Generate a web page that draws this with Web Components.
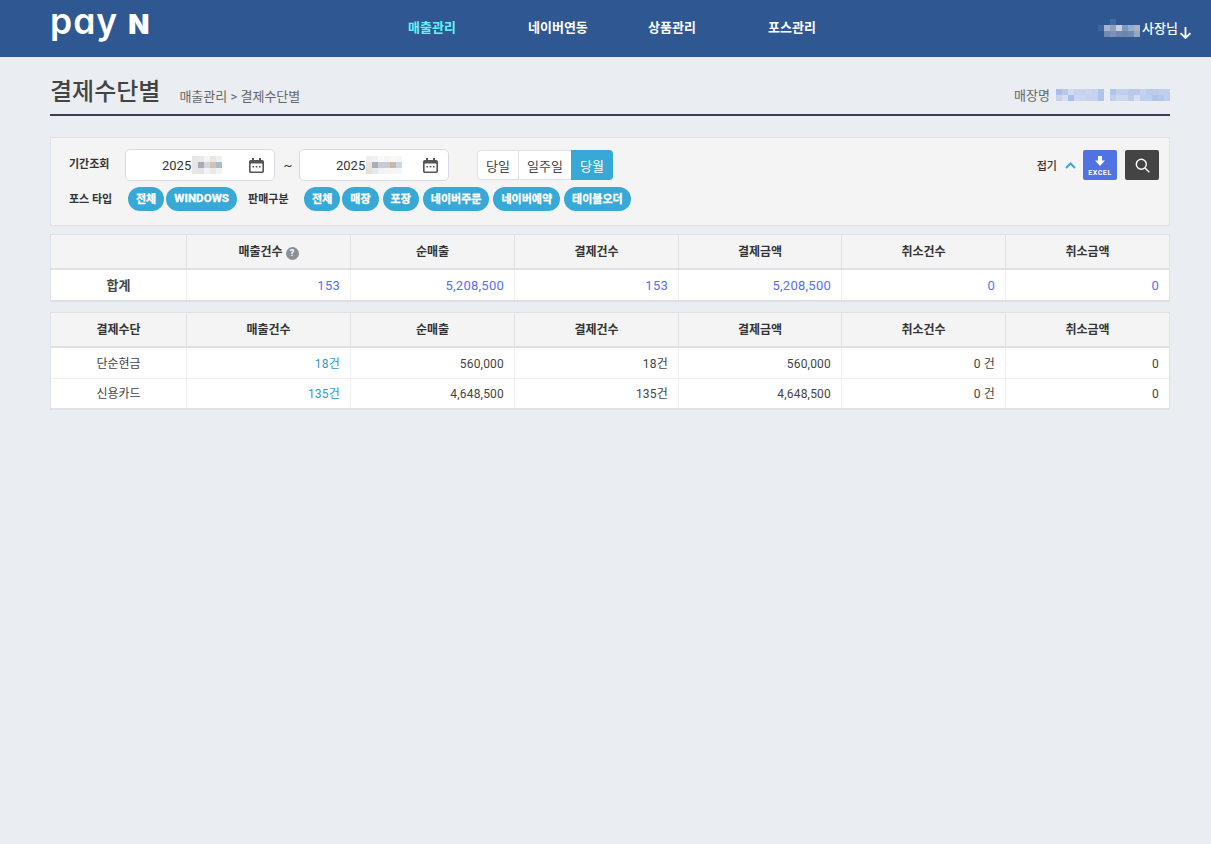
<!DOCTYPE html>
<html lang="ko">
<head>
<meta charset="utf-8">
<title>결제수단별</title>
<style>
  html, body { margin: 0; height: 100%; }
  body {
    background: #eaedf2;
    color: #444;
    font: 13px Roboto, "Noto Sans CJK KR", sans-serif;
  }
  main { display: block; padding: 0 41px 0 50px; }
</style>
</head>
<body>
<app-header></app-header>
<main>
  <page-title heading="결제수단별" crumb="매출관리 &gt; 결제수단별"></page-title>
  <filter-panel></filter-panel>

  <sales-table style="margin-top:8px">
    <sales-row head>
      <sales-cell></sales-cell>
      <sales-cell>매출건수 <help-dot></help-dot></sales-cell>
      <sales-cell>순매출</sales-cell>
      <sales-cell>결제건수</sales-cell>
      <sales-cell>결제금액</sales-cell>
      <sales-cell>취소건수</sales-cell>
      <sales-cell>취소금액</sales-cell>
    </sales-row>
    <sales-row>
      <sales-cell kind="title">합계</sales-cell>
      <sales-cell kind="total">153</sales-cell>
      <sales-cell kind="total">5,208,500</sales-cell>
      <sales-cell kind="total">153</sales-cell>
      <sales-cell kind="total">5,208,500</sales-cell>
      <sales-cell kind="total">0</sales-cell>
      <sales-cell kind="total">0</sales-cell>
    </sales-row>
  </sales-table>

  <sales-table style="margin-top:10px">
    <sales-row head>
      <sales-cell>결제수단</sales-cell>
      <sales-cell>매출건수</sales-cell>
      <sales-cell>순매출</sales-cell>
      <sales-cell>결제건수</sales-cell>
      <sales-cell>결제금액</sales-cell>
      <sales-cell>취소건수</sales-cell>
      <sales-cell>취소금액</sales-cell>
    </sales-row>
    <sales-row tall>
      <sales-cell kind="label">단순현금</sales-cell>
      <sales-cell kind="count">18건</sales-cell>
      <sales-cell kind="num">560,000</sales-cell>
      <sales-cell kind="num">18건</sales-cell>
      <sales-cell kind="num">560,000</sales-cell>
      <sales-cell kind="num">0 건</sales-cell>
      <sales-cell kind="num">0</sales-cell>
    </sales-row>
    <sales-row short>
      <sales-cell kind="label">신용카드</sales-cell>
      <sales-cell kind="count">135건</sales-cell>
      <sales-cell kind="num">4,648,500</sales-cell>
      <sales-cell kind="num">135건</sales-cell>
      <sales-cell kind="num">4,648,500</sales-cell>
      <sales-cell kind="num">0 건</sales-cell>
      <sales-cell kind="num">0</sales-cell>
    </sales-row>
  </sales-table>
</main>

<script>
  // pixelated area that stands in for masked text
  class MosaicBlur extends HTMLElement {
    connectedCallback() {
      const w = +this.getAttribute('w') || 6;
      const h = +this.getAttribute('h') || 6;
      const rows = (this.getAttribute('cells') || '').split('|').map(r => r.split(','));
      const cols = rows[0].length;
      const cells = rows.flat().map(c => `<i style="background:${c === '-' ? 'transparent' : '#' + c}"></i>`).join('');
      this.attachShadow({ mode: 'open' }).innerHTML = `
        <style>
          :host { display: inline-grid; grid-template-columns: repeat(${cols}, ${w}px); grid-auto-rows: ${h}px; vertical-align: middle; }
          i { display: block; }
        </style>${cells}`;
    }
  }
  customElements.define('mosaic-blur', MosaicBlur);

  class AppHeader extends HTMLElement {
    constructor() {
      super();
      const root = this.attachShadow({ mode: 'open' });
      root.innerHTML = `
        <style>
          :host { display: flex; align-items: center; height: 57px; background: #2f5892; color: #fff; padding: 0 19px 0 52px; }
          .logo { width: 356px; display: flex; align-items: baseline; height: 57px; white-space: nowrap; line-height: 43px; }
          .pay { font: 600 35.500px/43px Inter, sans-serif; font-feature-settings: "cv11"; margin-left: -2px; letter-spacing: 1px; }
          .n { font: 900 27.500px/43px Inter, sans-serif; margin-left: 10px; }
          nav { display: grid; grid-template-columns: repeat(4, 120px); font-weight: 700; font-size: 13px; padding-bottom: 4px; }
          nav a.on { color: #63f4fb; }
          .user { margin-left: auto; display: flex; align-items: center; font-size: 13px; font-weight: 500; padding-bottom: 2px; }
          .user span { margin-left: 2px; }
          svg { display: block; margin: 9px 0 0 1px; }
        </style>
        <div class="logo"><span class="pay">pay</span><span class="n">N</span></div>
        <nav><a class="on">매출관리</a><a>네이버연동</a><a>상품관리</a><a>포스관리</a></nav>
        <div class="user">
          <mosaic-blur cells="-,-,3f6aa0,-,-,-,-|3a659e,a5b3d0,8fa0c2,c8d0e2,7e97bb,8fb0d0,a9b2c8|-,6f8ab0,7d90b8,7088b0,6a88ae,6f8cb0,96a5c0"></mosaic-blur>
          <span>사장님</span>
          <svg width="13" height="13" viewBox="0 0 13 14" fill="none" stroke="#fff" stroke-width="2"><path d="M6.500 1v12M1.200 7.600l5.300 5.300 5.300-5.300"/></svg>
        </div>`;
    }
  }
  customElements.define('app-header', AppHeader);

  class PageTitle extends HTMLElement {
    connectedCallback() {
      this.attachShadow({ mode: 'open' }).innerHTML = `
        <style>
          :host { display: flex; align-items: flex-end; height: 57px; border-bottom: 2px solid #3c3c5c; margin-bottom: 21px; }
          .row { display: flex; align-items: flex-end; width: 100%; padding-bottom: 6px; }
          h1 { margin: 0; font-size: 24px; line-height: 32px; font-weight: 500; color: #444; }
          .crumb { margin-left: 19px; font-size: 13px; line-height: 22px; color: #666; }
          .store { margin-left: auto; font-size: 13px; line-height: 24px; color: #666; display: flex; align-items: center; }
          .store span { padding-top: 2px; }
          mosaic-blur { margin-left: 6px; }
        </style>
        <div class="row">
          <h1>${this.getAttribute('heading')}</h1>
          <span class="crumb">${this.getAttribute('crumb').replace('>', '&gt;')}</span>
          <div class="store"><span>매장명</span>
            <mosaic-blur cells="a9bfe9,b8c9ec,d0dcf0,c6d2ee,c6d2ee,cad6ee,c6d2ee,aec5ea|c6d2ee,d5deef,a9c0e9,cdd8ee,cad6ee,c6d2ee,c6d2ee,aec5ea"></mosaic-blur>
            <mosaic-blur cells="aec5ea,c0cfed,c0cfed,b8c9ec,b8c9ec,c6d2ee,b8ccee,b8ccee,c0cfed,c0cfed|c0cfed,cdd8ee,cdd8ee,bccbea,d8e0f0,c0cfed,bccfee,aec5ea,b5c8ea,bccfee"></mosaic-blur>
          </div>
        </div>`;
    }
  }
  customElements.define('page-title', PageTitle);

  class DateField extends HTMLElement {
    connectedCallback() {
      const cells = this.getAttribute('cells');
      const w = this.getAttribute('w');
      this.attachShadow({ mode: 'open' }).innerHTML = `
        <style>
          :host { display: flex; align-items: center; box-sizing: border-box; width: 150px; height: 32px; background: #fff; border: 1px solid #d8dadf; border-radius: 5px; padding: 0 10px 0 36px; font-size: 13px; color: #333; }
          svg { margin-left: auto; display: block; }
          mosaic-blur { margin-left: 1px; }
        </style>
        <span>2025</span>
        <mosaic-blur cells="${cells}" w="${w}"></mosaic-blur>
        <svg width="15" height="15" viewBox="0 0 15 15"><path d="M3 0h2v2h5V0h2v2h1.200c.9 0 1.800.8 1.800 1.800v9.400c0 1-.9 1.800-1.800 1.800H1.800C.9 15 0 14.200 0 13.200V3.800C0 2.800.9 2 1.800 2H3z" fill="#555"/><rect x="1.600" y="5.500" width="11.800" height="8" rx=".6" fill="#fff"/><path d="M3.500 8h1.500v1.600H3.500zM6.700 8h1.600v1.600H6.700zM10 8h1.500v1.600H10z" fill="#555"/></svg>`;
    }
  }
  customElements.define('date-field', DateField);

  class PillBtn extends HTMLElement {
    constructor() {
      super();
      this.attachShadow({ mode: 'open' }).innerHTML = `
        <style>
          :host { display: inline-flex; align-items: center; justify-content: center; box-sizing: border-box; height: 24px; padding: 0 8px 2px; border-radius: 12px; background: #38a9d6; color: #fff; font-size: 11px; font-weight: 700; -webkit-text-stroke: .3px #fff; white-space: nowrap; }
          :host([latin]) { font-size: 11.500px; letter-spacing: .1px; }
        </style><slot></slot>`;
    }
  }
  customElements.define('pill-btn', PillBtn);

  class FilterPanel extends HTMLElement {
    constructor() {
      super();
      this.attachShadow({ mode: 'open' }).innerHTML = `
        <style>
          :host { display: block; box-sizing: border-box; height: 89px; background: #f4f4f4; border: 1px solid #e0e1e4; padding: 11px 10px 0 18px; }
          .line { display: flex; align-items: center; }
          .top { height: 32px; }
          .bottom { height: 24px; margin-top: 6px; }
          .lbl { font-size: 11px; font-weight: 700; color: #333; }
          .top .lbl { width: 56px; margin-bottom: 4px; }
          .bottom .lbl { margin-bottom: 2px; }
          .bottom .lbl.first { width: 59px; }
          .tilde { width: 24px; box-sizing: border-box; padding-left: 2px; text-align: center; color: #333; }
          .seg { display: flex; height: 30px; margin-left: 28px; font-size: 13px; color: #444; }
          .seg span { display: flex; align-items: center; justify-content: center; box-sizing: border-box; background: #fff; border: 1px solid #e0e1e4; border-right: 0; }
          .seg span:first-child { width: 41px; border-radius: 4px 0 0 4px; }
          .seg span:nth-child(2) { width: 53px; }
          .seg span.on { width: 42px; background: #38a9d6; border: 0; color: #fff; border-radius: 0 4px 4px 0; }
          .tools { margin-left: auto; display: flex; align-items: center; }
          .fold { font-size: 11px; font-weight: 500; color: #333; }
          .chev { margin: 0 7px 0 8px; display: block; }
          .excel { width: 34px; height: 30px; border-radius: 2px; background: #4f73e3; color: #fff; display: flex; flex-direction: column; align-items: center; font: 700 7px/8px Roboto, sans-serif; letter-spacing: .6px; padding-top: 6px; box-sizing: border-box; }
          .excel svg { display: block; margin-bottom: 3px; }
          .find { width: 34px; height: 30px; border-radius: 2px; background: #444; margin-left: 8px; display: flex; align-items: center; justify-content: center; }
          .mid { margin-left: 11px; width: 56px; }
          pill-btn + pill-btn { margin-left: 4px; }
          .tight { margin-left: 2px !important; }
        </style>
        <div class="line top">
          <span class="lbl">기간조회</span>
          <date-field w="6" cells="e9e6e6,eae8ea,f4f4f5,ebe6e2,eff0f2|e8e6e4,a9abb9,d6d6da,cfc2b8,aebbc6|e9e6e4,e4e4e6,f2f2f4,eee9e5,f2f3f4"></date-field>
          <span class="tilde">~</span>
          <date-field w="6" cells="f0eeec,f2f1f1,fafafc,f8f6f5,fbf7f3,f4f6fa|e8e4dc,a7aeb9,c8cbd2,c8cbd2,c7b8a8,c8d8e8|e4e0da,e8e8ea,f0f2f6,f4f4f6,fbf5f0,f4f6fa"></date-field>
          <div class="seg"><span>당일</span><span>일주일</span><span class="on">당월</span></div>
          <div class="tools">
            <span class="fold">접기</span>
            <svg class="chev" width="11" height="7" viewBox="0 0 11 7" fill="none" stroke="#38a9d6" stroke-width="2"><path d="M1 6l4.500-4.500L10 6"/></svg>
            <div class="excel"><svg width="10" height="10" viewBox="0 0 10 10" fill="#fff"><path d="M3 0h4v4.500h3L5 10 0 4.500h3z"/></svg>EXCEL</div>
            <div class="find"><svg width="15" height="15" viewBox="0 0 15 15" fill="none" stroke="#fff" stroke-width="1.400"><circle cx="6.300" cy="6.300" r="5"/><path d="M10 10l4.300 4.300"/></svg></div>
          </div>
        </div>
        <div class="line bottom">
          <span class="lbl first">포스 타입</span>
          <pill-btn>전체</pill-btn><pill-btn class="tight" latin>WINDOWS</pill-btn>
          <span class="lbl mid">판매구분</span>
          <pill-btn>전체</pill-btn><pill-btn class="tight">매장</pill-btn><pill-btn>포장</pill-btn><pill-btn>네이버주문</pill-btn><pill-btn>네이버예약</pill-btn><pill-btn>테이블오더</pill-btn>
        </div>`;
    }
  }
  customElements.define('filter-panel', FilterPanel);

  class SalesTable extends HTMLElement {
    constructor() {
      super();
      this.attachShadow({ mode: 'open' }).innerHTML = `
        <style>
          :host { display: block; border: 1px solid #e0e1e4; border-bottom-width: 2px; background: #fff; }
        </style><slot></slot>`;
    }
  }
  customElements.define('sales-table', SalesTable);

  class SalesRow extends HTMLElement {
    constructor() {
      super();
      this.attachShadow({ mode: 'open' }).innerHTML = `
        <style>
          :host { display: grid; box-sizing: border-box; grid-template-columns: 136px 164px 164px 164px 163px 164px 1fr; height: 30px; line-height: 16px; }
          :host([head]) { height: 35px; background: #f4f4f4; border-bottom: 2px solid #e0e1e4; font-weight: 700; font-size: 12px; color: #333; --cell-line: #e0e1e4; }
          :host([tall]) { height: 31px; border-bottom: 1px solid #eef0f2; }
          :host([short]) { height: 29px; }
          :host(:not([head]):not([short])) { --cell-top: 1px; }
        </style><slot></slot>`;
    }
  }
  customElements.define('sales-row', SalesRow);

  class SalesCell extends HTMLElement {
    constructor() {
      super();
      this.attachShadow({ mode: 'open' }).innerHTML = `
        <style>
          :host { display: flex; align-items: center; justify-content: center; box-sizing: border-box; padding-top: var(--cell-top, 0); border-right: 1px solid var(--cell-line, #eef0f2); white-space: pre; }
          :host(:last-child) { border-right: 0; }
          :host([kind="title"]) { font-weight: 700; color: #444; }
          :host([kind="label"]) { font-size: 12px; color: #444; }
          :host([kind="total"]), :host([kind="count"]), :host([kind="num"]) { justify-content: flex-end; padding-right: 10px; font-size: 12px; letter-spacing: .2px; }
          :host([kind="total"]) { color: #5570f5; font-size: 13px; letter-spacing: .25px; }
          :host([kind="count"]) { color: #2f98c8; }
          :host([kind="num"]) { color: #444; }
        </style><slot></slot>`;
    }
  }
  customElements.define('sales-cell', SalesCell);

  class HelpDot extends HTMLElement {
    constructor() {
      super();
      this.attachShadow({ mode: 'open' }).innerHTML = `
        <style>
          :host { display: inline-flex; align-items: center; justify-content: center; width: 13px; height: 13px; border-radius: 50%; background: #8a8f99; color: #fff; font: 700 9px/13px Roboto, sans-serif; margin-top: 4px; }
        </style>?`;
    }
  }
  customElements.define('help-dot', HelpDot);
</script>
</body>
</html>
